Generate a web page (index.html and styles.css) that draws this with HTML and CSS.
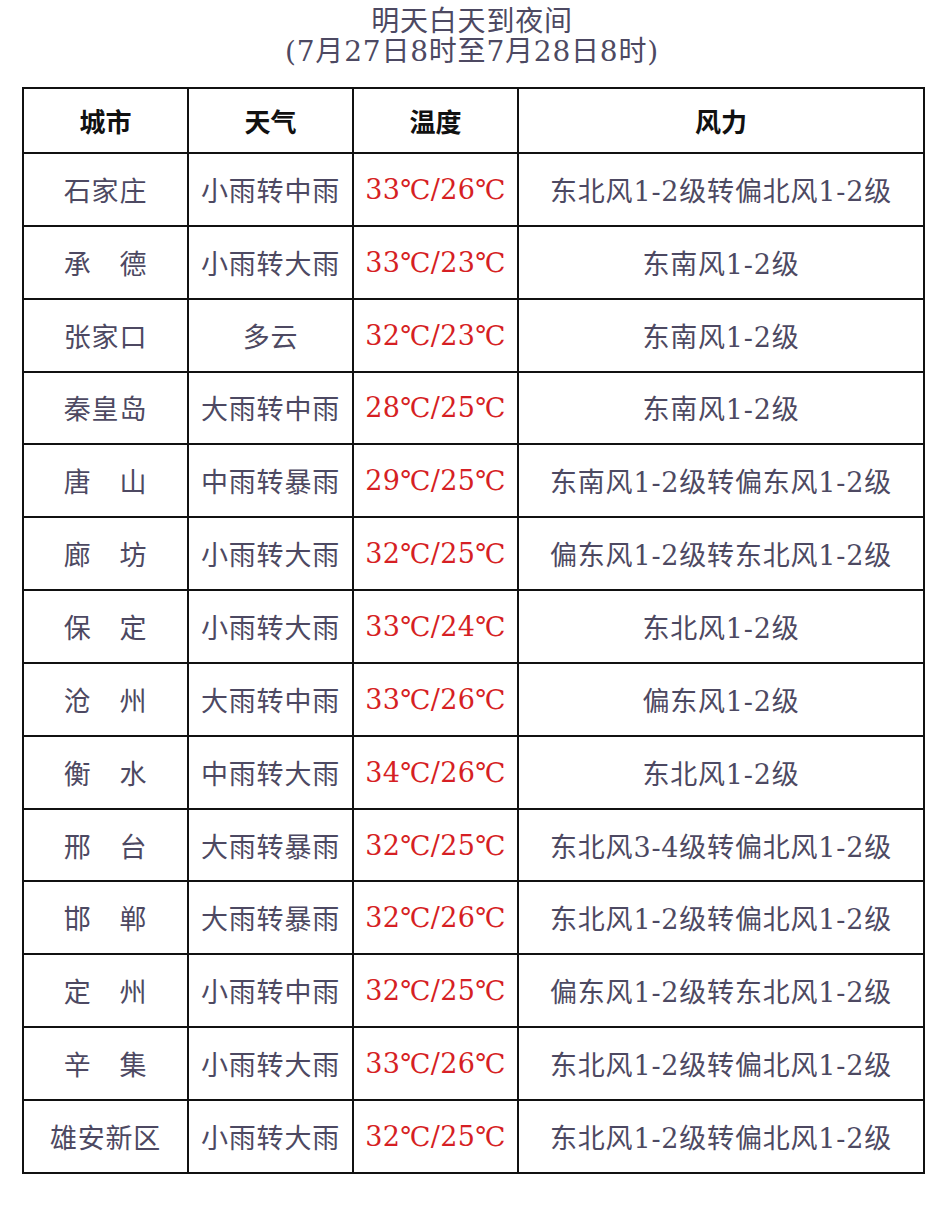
FILE: index.html
```html
<!DOCTYPE html>
<html lang="zh-CN">
<head>
<meta charset="utf-8">
<title>明天白天到夜间</title>
<link rel="stylesheet" href="styles.css">
</head>
<body>
<div class="page">
  <div class="title">
    <div class="t1">明天白天到夜间</div>
    <div class="t2">(7月27日8时至7月28日8时)</div>
  </div>
  <table class="wx">
    <colgroup><col class="c1"><col class="c2"><col class="c3"><col class="c4"></colgroup>
    <thead>
      <tr><th>城市</th><th>天气</th><th>温度</th><th>风力</th></tr>
    </thead>
    <tbody>
      <tr><td>石家庄</td><td>小雨转中雨</td><td class="temp">33℃/26℃</td><td>东北风1-2级转偏北风1-2级</td></tr>
      <tr><td>承　德</td><td>小雨转大雨</td><td class="temp">33℃/23℃</td><td>东南风1-2级</td></tr>
      <tr><td>张家口</td><td>多云</td><td class="temp">32℃/23℃</td><td>东南风1-2级</td></tr>
      <tr><td>秦皇岛</td><td>大雨转中雨</td><td class="temp">28℃/25℃</td><td>东南风1-2级</td></tr>
      <tr><td>唐　山</td><td>中雨转暴雨</td><td class="temp">29℃/25℃</td><td>东南风1-2级转偏东风1-2级</td></tr>
      <tr><td>廊　坊</td><td>小雨转大雨</td><td class="temp">32℃/25℃</td><td>偏东风1-2级转东北风1-2级</td></tr>
      <tr><td>保　定</td><td>小雨转大雨</td><td class="temp">33℃/24℃</td><td>东北风1-2级</td></tr>
      <tr><td>沧　州</td><td>大雨转中雨</td><td class="temp">33℃/26℃</td><td>偏东风1-2级</td></tr>
      <tr><td>衡　水</td><td>中雨转大雨</td><td class="temp">34℃/26℃</td><td>东北风1-2级</td></tr>
      <tr><td>邢　台</td><td>大雨转暴雨</td><td class="temp">32℃/25℃</td><td>东北风3-4级转偏北风1-2级</td></tr>
      <tr><td>邯　郸</td><td>大雨转暴雨</td><td class="temp">32℃/26℃</td><td>东北风1-2级转偏北风1-2级</td></tr>
      <tr><td>定　州</td><td>小雨转中雨</td><td class="temp">32℃/25℃</td><td>偏东风1-2级转东北风1-2级</td></tr>
      <tr><td>辛　集</td><td>小雨转大雨</td><td class="temp">33℃/26℃</td><td>东北风1-2级转偏北风1-2级</td></tr>
      <tr><td>雄安新区</td><td>小雨转大雨</td><td class="temp">32℃/25℃</td><td>东北风1-2级转偏北风1-2级</td></tr>
    </tbody>
  </table>
</div>
</body>
</html>
```
FILE: styles.css
```css
html, body {
  margin: 0;
  padding: 0;
  background: #ffffff;
}
.page {
  width: 942px;
  padding: 7px 0 0 22px;
  box-sizing: border-box;
  font-family: "DejaVu Serif", "Noto Sans CJK SC", serif;
}
.title {
  width: 900px;
  text-align: center;
  color: #4d4962;
  font-size: 28px;
  line-height: 30px;
  letter-spacing: 0.8px;
  margin-bottom: 20px;
}
.wx {
  width: 901px;
  border-collapse: collapse;
  table-layout: fixed;
}
.c1, .c2, .c3 { width: 165px; }
.c4 { width: 406px; }
.wx th, .wx td {
  border: 2px solid #111111;
  text-align: center;
  vertical-align: middle;
  padding: 0;
  white-space: nowrap;
}
.wx th {
  height: 63px;
  font-size: 26px;
  font-weight: bold;
  color: #111111;
  font-family: "Noto Sans CJK SC", serif;
}
.wx td {
  height: 70.85px;
  font-size: 27px;
  letter-spacing: 0.8px;
  color: #4d4962;
}
.wx td.temp {
  color: #d61f24;
  letter-spacing: 0.3px;
}
```
